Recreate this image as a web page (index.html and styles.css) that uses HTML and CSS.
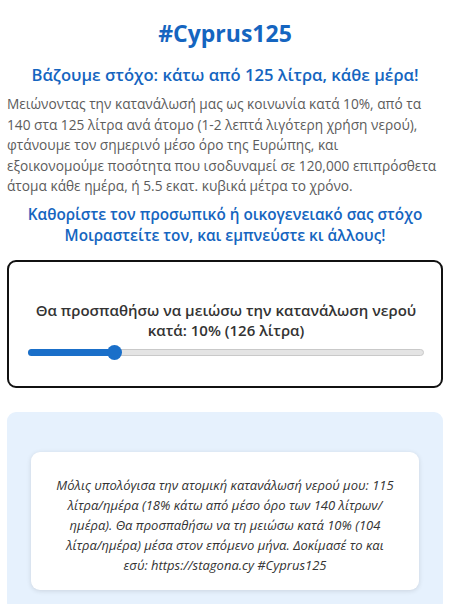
FILE: index.html
```html
<!DOCTYPE html>
<html lang="el">
<head>
<meta charset="utf-8">
<link rel="stylesheet" href="styles.css">
</head>
<body>
<main class="page">
  <h1 class="title">#Cyprus125</h1>
  <h2 class="subtitle">Βάζουμε στόχο: κάτω από 125 λίτρα, κάθε μέρα!</h2>
  <p class="intro">Μειώνοντας την κατανάλωσή μας ως κοινωνία κατά 10%, από τα 140 στα 125 λίτρα ανά άτομο (1-2 λεπτά λιγότερη χρήση νερού), φτάνουμε τον σημερινό μέσο όρο της Ευρώπης, και<br>εξοικονομούμε ποσότητα που ισοδυναμεί σε 120,000 επιπρόσθετα άτομα κάθε ημέρα, ή 5.5 εκατ. κυβικά μέτρα το χρόνο.</p>
  <p class="cta">Καθορίστε τον προσωπικό ή οικογενειακό σας στόχο<br>Μοιραστείτε τον, και εμπνεύστε κι άλλους!</p>
  <section class="goal-card">
    <p class="goal-text">Θα προσπαθήσω να μειώσω την κατανάλωση νερού κατά: 10% (126 λίτρα)</p>
    <div class="slider">
      <div class="slider-fill" style="width: 21.5%"></div>
      <div class="slider-thumb" style="left: 21.5%"></div>
    </div>
  </section>
  <section class="share-box">
    <div class="share-card">
      <p class="share-text">Μόλις υπολόγισα την ατομική κατανάλωσή νερού μου: 115 λίτρα/ημέρα (18% κάτω από μέσο όρο των 140 λίτρων/ ημέρα). Θα προσπαθήσω να τη μειώσω κατά 10% (104 λίτρα/ημέρα) μέσα στον επόμενο μήνα. Δοκίμασέ το και εσύ: https://stagona.cy #Cyprus125</p>
    </div>
  </section>
</main>
</body>
</html>
```

FILE: styles.css
```css
* { box-sizing: border-box; }
html, body { margin: 0; padding: 0; background: #fff; }
body { font-family: "Open Sans", "Noto Sans", sans-serif; color: #555; }
.page { padding: 0 8px 0 7px; }
.title {
  margin: 0;
  padding-top: 18px;
  text-align: center;
  font-size: 23px;
  font-weight: 700;
  color: #1565c0;
  line-height: 30px;
}
.subtitle {
  margin: 16px 0 0;
  text-align: center;
  font-size: 16.6px;
  font-weight: 600;
  color: #1565c0;
  line-height: 22px;
}
.intro {
  margin: 8px 0 0;
  font-size: 13.7px;
  line-height: 20.5px;
  color: #5c5c5c;
}
.cta {
  margin: 7px 0 0;
  text-align: center;
  font-size: 15.3px;
  font-weight: 600;
  line-height: 21px;
  color: #1565c0;
}
.goal-card {
  margin-top: 14px;
  border: 2px solid #111;
  border-radius: 9px;
  padding: 38px 17px 0 19px;
  height: 128px;
}
.goal-text {
  margin: 0;
  text-align: center;
  font-size: 15px;
  font-weight: 600;
  line-height: 20px;
  color: #333;
}
.slider {
  position: relative;
  margin-top: 9px;
  height: 7px;
  border-radius: 4px;
  background: #e4e4e4;
  border: 1px solid #c9c9c9;
}
.slider-fill {
  position: absolute;
  left: -1px; top: -1px; bottom: -1px;
  background: #1a6fc9;
  border-radius: 4px;
}
.slider-thumb {
  position: absolute;
  top: 50%;
  width: 15px; height: 15px;
  margin-left: -7px;
  margin-top: -7.5px;
  border-radius: 50%;
  background: #1a6fc9;
}
.share-box {
  margin-top: 24px;
  background: #e6f1fd;
  border-radius: 9px;
  padding: 40px 24px 20px;
  height: 200px;
}
.share-card {
  background: #fff;
  border-radius: 9px;
  box-shadow: 0 1px 5px rgba(0,0,0,0.12);
  padding: 23px 22px 20px;
  height: 138px;
}
.share-text {
  margin: 0;
  text-align: center;
  font-style: italic;
  font-size: 13px;
  line-height: 20px;
  color: #333;
}
```
